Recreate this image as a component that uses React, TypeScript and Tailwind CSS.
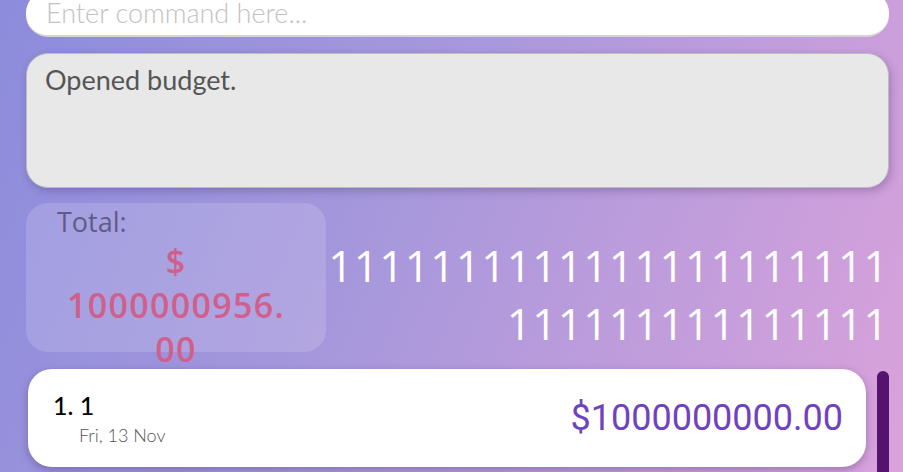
import React from 'react';

const lato = "font-['Lato','Liberation_Sans',sans-serif]";
const openSans = "font-['Open_Sans','Liberation_Sans',sans-serif]";

const ExpenseRow = () => {
  return (
    <div className="ml-[2px] flex h-[98px] w-[838px] items-center justify-between rounded-[24px] bg-white pl-[25px] pr-[23px] shadow-[0_3px_8px_rgba(60,40,100,0.35)]">
      <div className={`${lato} flex flex-col`}>
        <span className="text-[25px] font-medium leading-[30px] text-black">1. 1</span>
        <span className="mt-[4px] pl-[26px] text-[18px] font-light leading-[22px] text-[#555]">Fri, 13 Nov</span>
      </div>
      <span className="font-['Roboto',sans-serif] text-[36px] leading-[40px] text-[#6f42c1]">$1000000000.00</span>
    </div>
  );
};

export default function App() {
  return (
    <div className="h-[472px] w-full overflow-hidden bg-[linear-gradient(112deg,#8c8cdc_0%,#a898dc_45%,#daa2db_100%)]">
      <div className="flex flex-col pl-[26px] pr-[14px]">
        <div className="-mt-[9px] flex h-[46px] items-center rounded-[22px] border-b-2 border-[#d4d4d4] bg-white pl-[20px]">
          <span className={`${lato} text-[27px] font-light leading-[32px] text-[#c2c2c2]`}>Enter command here...</span>
        </div>

        <div className="mt-[16px] h-[135px] rounded-[22px] border border-[#bdbdbd] bg-[#e8e8e8] px-[18px] pt-[8px] shadow-[2px_3px_8px_rgba(60,40,100,0.3)]">
          <p className={`${lato} text-[27px] leading-[36px] text-[#555]`}>Opened budget.</p>
        </div>

        <div className="mt-[15px] flex h-[166px] items-start">
          <div className="h-[149px] w-[300px] shrink-0 rounded-[22px] bg-white/15 px-[31px] pt-[2px]">
            <p className={`${openSans} text-[27px] leading-[34px] text-[#5e5c86]`}>Total:</p>
            <p className={`${openSans} mx-auto w-[225px] break-words text-center text-[34px] font-semibold leading-[44px] tracking-[1.3px] text-[#d0608b]`}>
              $ 1000000956.00
            </p>
          </div>
          <p className={`${openSans} min-w-0 flex-1 break-all pt-[34px] text-right text-[43px] leading-[58px] tracking-[0.9px] text-white`}>
            1111111111111111111111111111111111111
          </p>
        </div>

        <div className="flex items-start">
          <ExpenseRow />
          <div className="ml-auto mt-[2px] h-[110px] w-[12px] rounded-full bg-[#55126f]" />
        </div>
      </div>
    </div>
  );
}
